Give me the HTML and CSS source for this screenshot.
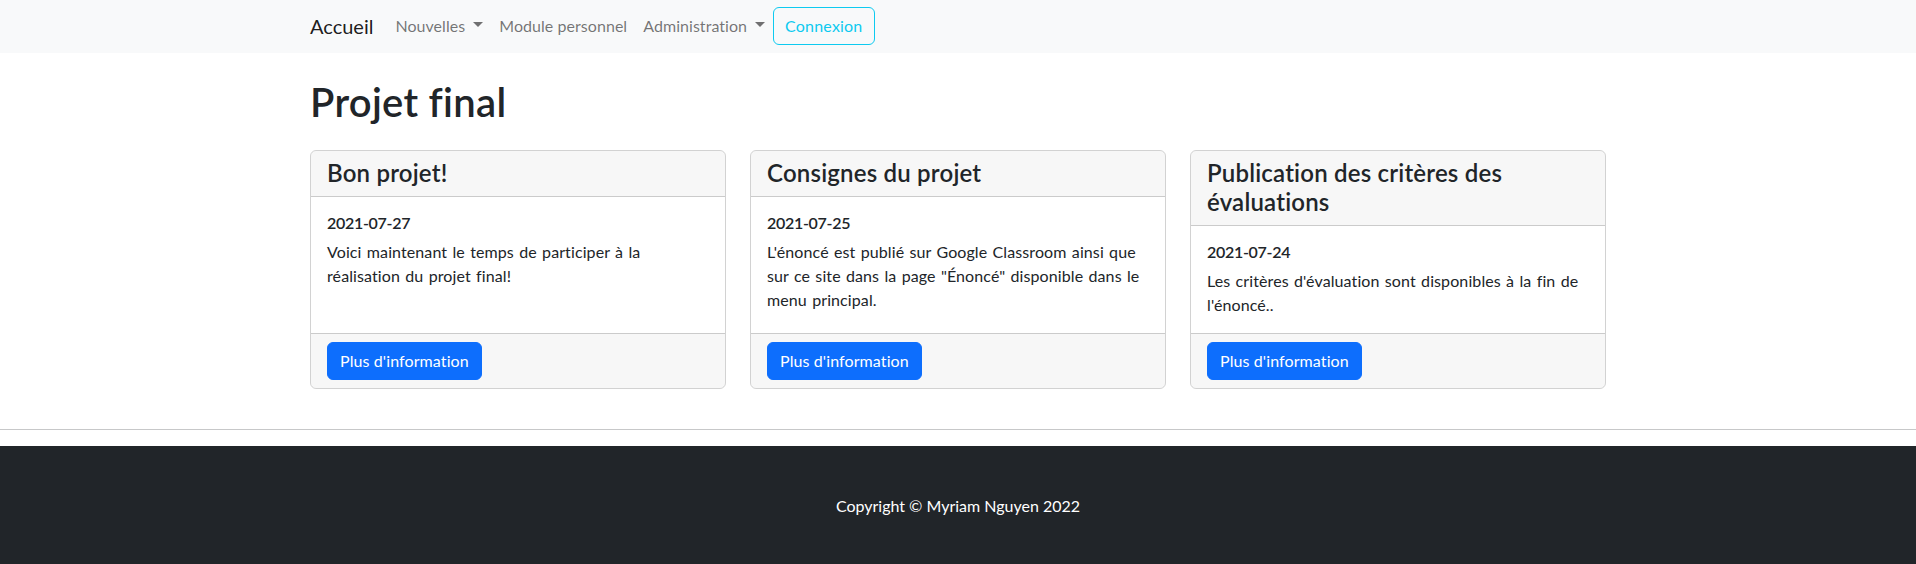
FILE: index.html
```html
<!DOCTYPE html>
<html lang="fr">
<head>
<meta charset="utf-8">
<title>Projet final</title>
<link rel="stylesheet" href="styles.css">
</head>
<body>
<nav class="navbar">
  <div class="container nav-inner">
    <a class="brand" href="#">Accueil</a>
    <ul class="nav-links">
      <li><a class="nav-link dropdown" href="#">Nouvelles</a></li>
      <li><a class="nav-link" href="#">Module personnel</a></li>
      <li><a class="nav-link dropdown" href="#">Administration</a></li>
      <li><a class="btn-outline-info" href="#">Connexion</a></li>
    </ul>
  </div>
</nav>

<main class="container main">
  <h1 class="page-title">Projet final</h1>
  <div class="cards">
    <div class="card">
      <div class="card-header"><h4 class="card-title">Bon projet!</h4></div>
      <div class="card-body">
        <h6 class="card-date">2021-07-27</h6>
        <p class="card-text">Voici maintenant le temps de participer à la réalisation du projet final!</p>
      </div>
      <div class="card-footer"><a class="btn-primary" href="#">Plus d'information</a></div>
    </div>
    <div class="card">
      <div class="card-header"><h4 class="card-title">Consignes du projet</h4></div>
      <div class="card-body">
        <h6 class="card-date">2021-07-25</h6>
        <p class="card-text">L'énoncé est publié sur Google Classroom ainsi que sur ce site dans la page "Énoncé" disponible dans le menu principal.</p>
      </div>
      <div class="card-footer"><a class="btn-primary" href="#">Plus d'information</a></div>
    </div>
    <div class="card">
      <div class="card-header"><h4 class="card-title">Publication des critères des évaluations</h4></div>
      <div class="card-body">
        <h6 class="card-date">2021-07-24</h6>
        <p class="card-text">Les critères d'évaluation sont disponibles à la fin de l'énoncé..</p>
      </div>
      <div class="card-footer"><a class="btn-primary" href="#">Plus d'information</a></div>
    </div>
  </div>
</main>

<hr class="divider">

<footer class="site-footer">
  <p class="copyright">Copyright © Myriam Nguyen 2022</p>
</footer>
</body>
</html>
```

FILE: styles.css
```css
* { box-sizing: border-box; }

html, body {
  margin: 0;
  padding: 0;
}

body {
  font-family: "Lato", "Noto Sans", "Liberation Sans", sans-serif;
  font-size: 16px;
  line-height: 1.5;
  color: #212529;
  background: #fff;
}

a { text-decoration: none; }

.container {
  width: 1320px;
  margin: 0 auto;
  padding: 0 12px;
}

/* Navbar */
.navbar {
  background: #f8f9fa;
  height: 53px;
}

.nav-inner {
  display: flex;
  align-items: center;
  height: 100%;
  padding-top: 6px;
  padding-bottom: 8px;
}

.brand {
  font-size: 20px;
  line-height: 30px;
  color: rgba(0, 0, 0, 0.9);
  margin-right: 14px;
}

.nav-links {
  list-style: none;
  margin: 0;
  padding: 0;
  display: flex;
  align-items: center;
}

.nav-link {
  display: block;
  padding: 8px;
  color: rgba(0, 0, 0, 0.55);
  line-height: 24px;
  letter-spacing: 0.05px;
}

.dropdown::after {
  content: "";
  display: inline-block;
  margin-left: 0.5em;
  vertical-align: 0.255em;
  border-top: 0.32em solid;
  border-right: 0.32em solid transparent;
  border-left: 0.32em solid transparent;
}

.btn-outline-info {
  display: inline-block;
  color: #0dcaf0;
  border: 1px solid #0dcaf0;
  border-radius: 6px;
  padding: 6px 11px;
  line-height: 24px;
  letter-spacing: 0.2px;
}

/* Main */
.main {
  padding-bottom: 24px;
}

.page-title {
  font-size: 40px;
  font-weight: 600;
  line-height: 48px;
  margin: 25px 0 24px;
  letter-spacing: 0.3px;
}

.cards {
  display: grid;
  grid-template-columns: repeat(3, 416px);
  column-gap: 24px;
}

.card {
  display: flex;
  flex-direction: column;
  border: 1px solid rgba(0, 0, 0, 0.175);
  border-radius: 6px;
  overflow: hidden;
}

.card-header {
  background: rgba(0, 0, 0, 0.03);
  border-bottom: 1px solid rgba(0, 0, 0, 0.175);
  padding: 8px 16px;
}

.card-title {
  margin: 0;
  font-size: 24px;
  font-weight: 600;
  line-height: 1.2;
  letter-spacing: 0.2px;
}

.card-body {
  flex: 1 1 auto;
  padding: 16px;
}

.card-date {
  margin: 0 0 8px;
  font-size: 16px;
  font-weight: 600;
  line-height: 1.2;
  letter-spacing: -0.3px;
}

.card-text {
  margin: 0;
  letter-spacing: 0.1px;
  word-spacing: 1.1px;
}

.card-footer {
  background: rgba(0, 0, 0, 0.03);
  border-top: 1px solid rgba(0, 0, 0, 0.175);
  padding: 8px 16px;
}

.btn-primary {
  display: inline-block;
  background: #0d6efd;
  color: #fff;
  border: 1px solid #0d6efd;
  border-radius: 6px;
  padding: 6px 12px;
  line-height: 24px;
  letter-spacing: 0.1px;
}

/* Footer */
.divider {
  margin: 16px 0;
  border: 0;
  border-top: 1px solid #212529;
  opacity: 0.25;
}

.site-footer {
  background: #212529;
  padding: 48px 0 46px;
  text-align: center;
}

.copyright {
  margin: 0;
  color: #fff;
}
```
